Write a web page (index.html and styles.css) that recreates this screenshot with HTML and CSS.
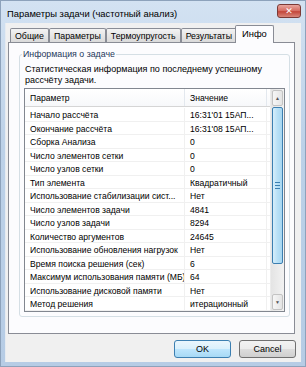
FILE: index.html
```html
<!DOCTYPE html>
<html lang="ru">
<head>
  <meta charset="UTF-8" />
  <title>Параметры задачи (частотный анализ)</title>
  <link rel="stylesheet" href="styles.css">
</head>
<body>

  <div class="window">
    <div class="titlebar">
      <span class="title">Параметры задачи (частотный анализ)</span>
      <span class="close">✕</span>
    </div>

    <div class="client">
      <!-- Tabs -->
      <div class="tabs">
        <div class="tab">Общие</div>
        <div class="tab">Параметры</div>
        <div class="tab">Термоупругость</div>
        <div class="tab">Результаты</div>
        <div class="tab active">Инфо</div>
      </div>

      <div class="tab-panel">
        <fieldset class="group">
          <legend>Информация о задаче</legend>
          <p class="info-text">Статистическая информация по последнему успешному рассчёту задачи.</p>

          <div class="list">
            <div class="list-body">
              <div class="list-row list-header">
                <div class="cell">Параметр</div>
                <div class="cell">Значение</div>
              </div>
              <div class="rows">
                <div class="list-row"><div class="cell">Начало рассчёта</div><div class="cell">16:31'01 15АП...</div></div>
                <div class="list-row"><div class="cell">Окончание рассчёта</div><div class="cell">16:31'08 15АП...</div></div>
                <div class="list-row"><div class="cell">Сборка Анализа</div><div class="cell">0</div></div>
                <div class="list-row"><div class="cell">Число элементов сетки</div><div class="cell">0</div></div>
                <div class="list-row"><div class="cell">Число узлов сетки</div><div class="cell">0</div></div>
                <div class="list-row"><div class="cell">Тип элемента</div><div class="cell">Квадратичный</div></div>
                <div class="list-row"><div class="cell">Использование стабилизации сист...</div><div class="cell">Нет</div></div>
                <div class="list-row"><div class="cell">Число элементов задачи</div><div class="cell">4841</div></div>
                <div class="list-row"><div class="cell">Число узлов задачи</div><div class="cell">8294</div></div>
                <div class="list-row"><div class="cell">Количество аргументов</div><div class="cell">24645</div></div>
                <div class="list-row"><div class="cell">Использование обновления нагрузок</div><div class="cell">Нет</div></div>
                <div class="list-row"><div class="cell">Время поиска решения (сек)</div><div class="cell">6</div></div>
                <div class="list-row"><div class="cell">Максимум использования памяти (МБ)</div><div class="cell">64</div></div>
                <div class="list-row"><div class="cell">Использование дисковой памяти</div><div class="cell">Нет</div></div>
                <div class="list-row"><div class="cell">Метод решения</div><div class="cell">итерационный</div></div>
              </div>
            </div>

            <!-- vertical scrollbar -->
            <div class="scrollbar">
              <div class="sb-btn">▲</div>
              <div class="sb-thumb"><span class="grip"></span></div>
              <div class="sb-track"></div>
              <div class="sb-btn">▼</div>
            </div>
          </div>
        </fieldset>
      </div>

      <div class="buttons">
        <button class="btn default">OK</button>
        <button class="btn">Cancel</button>
      </div>
    </div>
  </div>

</body>
</html>
```

FILE: styles.css
```css
body {
  margin: 0;
  font-family: "Liberation Sans", Arial, sans-serif;
  font-size: 8.8px;
  color: #000;
  background: #fff;
}

.window {
  width: 306px;
  height: 367px;
  box-sizing: border-box;
  border: 1px solid #8da2bb;
  background: linear-gradient(#d3e2f2, #bcd1e8 40%, #b6cce5);
  display: flex;
  flex-direction: column;
}

.titlebar {
  height: 22px;
  display: flex;
  align-items: center;
  justify-content: space-between;
  padding: 0 4px 0 6px;
}

.title {
  font-size: 9.4px;
  margin-top: 3px;
}

.close {
  width: 22px;
  height: 12px;
  margin-top: -2px;
  border: 1px solid #7b3a36;
  border-radius: 3px;
  background: linear-gradient(#e8a69e, #d56b60 50%, #c3463a 55%, #d8877b);
  color: #fff;
  font-family: "DejaVu Sans", sans-serif;
  font-size: 9px;
  font-weight: bold;
  line-height: 12px;
  text-align: center;
}

.client {
  flex: 1;
  margin: 0 4px 4px 4px;
  background: #f0f0f0;
  border-left: 1px solid #e6ebf1;
  display: flex;
  flex-direction: column;
}

/* Tabs */
.tabs {
  height: 19px;
  display: flex;
  align-items: flex-end;
  padding-left: 4px;
}

.tab {
  height: 13px;
  padding: 0 4px;
  line-height: 14px;
  border: 1px solid #898c95;
  border-bottom: none;
  border-radius: 2px 2px 0 0;
  background: linear-gradient(#f3f3f3, #e6e6e6 50%, #dadada);
}

.tab.active {
  height: 17px;
  line-height: 15px;
  padding: 0 6px;
  margin: 0 0 -1px -2px;
  background: #fcfcfe;
  position: relative;
  font-size: 9.4px;
}

.tab-panel {
  height: 290px;
  margin: 0 6px 0 2px;
  border: 1px solid #898c95;
  background: #fcfcfe;
  display: flex;
}

/* Group box */
.group {
  flex: 1;
  margin: 5px 4px 16px 10px;
  padding: 0 4px 4px 4px;
  border: 1px solid #d5dfe5;
  border-radius: 3px;
  min-width: 0;
  display: flex;
  flex-direction: column;
}

.group legend {
  padding: 0 1px;
  margin-left: -2px;
  line-height: 12px;
  color: #1e395b;
}

.info-text {
  margin: 4px 0 2px 1px;
  line-height: 11px;
  font-size: 9px;
}

/* List view */
.list {
  flex: 1;
  border: 1px solid #828790;
  background: #fff;
  display: flex;
  overflow: hidden;
  font-size: 8.6px;
}

.list-body {
  flex: 1;
  overflow: hidden;
}

.list-row {
  display: grid;
  grid-template-columns: 160px 82px;
  height: 13.5px;
  line-height: 13.5px;
  border-bottom: 1px solid #f0f0f0;
  box-sizing: border-box;
}

.cell {
  padding: 1px 0 0 5px;
  white-space: nowrap;
  overflow: hidden;
  border-right: 1px solid #f0f0f0;
}

.list-header {
  height: 18px;
  line-height: 17px;
  background: linear-gradient(#ffffff, #f7f8fa);
  border-bottom: 1px solid #d5d5d5;
}

.list-header .cell {
  border-right: 1px solid #e3e8ee;
}

.rows {
  padding-top: 1px;
}

/* Scrollbar */
.scrollbar {
  width: 13px;
  background: linear-gradient(to right, #e4e4e4, #f2f2f2);
  border-left: 1px solid #ececec;
  display: flex;
  flex-direction: column;
}

.sb-btn {
  height: 14px;
  margin: 1px;
  border: 1px solid #c3c3c3;
  border-radius: 2px;
  background: linear-gradient(to right, #f6f6f6, #e4e4e4);
  color: #555;
  font-size: 5px;
  line-height: 14px;
  text-align: center;
}

.sb-thumb {
  height: 155px;
  margin: 0 1px;
  border: 1px solid #3c7fb1;
  border-radius: 2px;
  background: linear-gradient(to right, #d6eefb, #b8e0f6 50%, #a7d7f2);
  display: flex;
  align-items: center;
  justify-content: center;
}

.grip {
  width: 5px;
  height: 5px;
  border-top: 1px solid #3c7fb1;
  border-bottom: 1px solid #3c7fb1;
  background: linear-gradient(transparent 2px, #3c7fb1 2px, #3c7fb1 3px, transparent 3px);
}

.sb-track {
  flex: 1;
}

/* Buttons */
.buttons {
  display: flex;
  justify-content: flex-end;
  gap: 8px;
  padding: 6px 5px 0 0;
}

.btn {
  width: 57px;
  height: 18px;
  padding: 0;
  font-family: inherit;
  font-size: 9px;
  border: 1px solid #707070;
  border-radius: 3px;
  background: linear-gradient(#f2f2f2, #ebebeb 50%, #dddddd 51%, #cfcfcf);
}

.btn.default {
  border-color: #3c7fb1;
  background: linear-gradient(#eaf6fd, #d9f0fc 50%, #bee6fd 51%, #a7d9f5);
}
```
